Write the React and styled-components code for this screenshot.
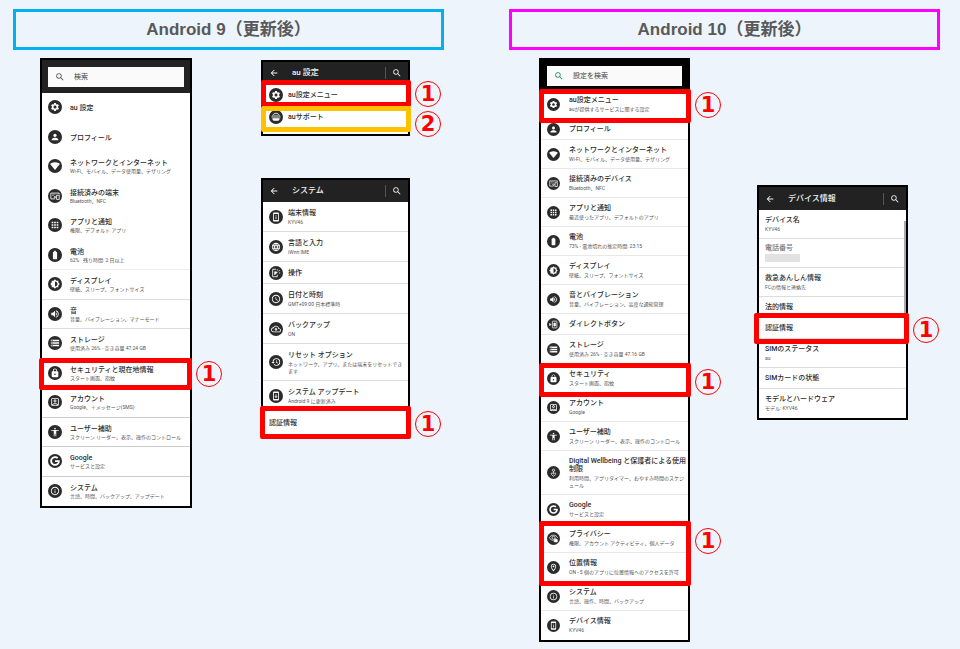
import React from "react";
import styled, { createGlobalStyle } from "styled-components";
import {
  MdAccessTime,
  MdAccessibility,
  MdApps,
  MdArrowBack,
  MdBatteryFull,
  MdBrightness6,
  MdHistory,
  MdInfoOutline,
  MdLanguage,
  MdLock,
  MdOutlineAccountBox,
  MdOutlineBackup,
  MdOutlineLocationOn,
  MdPermDeviceInformation,
  MdPerson,
  MdSearch,
  MdSettings,
  MdSignalWifi4Bar,
  MdStorage,
  MdSystemUpdate,
  MdVolumeUp,
} from "react-icons/md";
import { FaGoogle } from "react-icons/fa";

const DevicesIcon = () => (
  <svg viewBox="0 0 24 24" fill="none" stroke="currentColor" strokeWidth="2">
    <path d="M12 19H2V5h20v3" />
    <path d="M5 8h8M5 11h5" strokeWidth="1" />
    <rect x="16" y="10" width="6" height="10" />
    <circle cx="12" cy="15" r="2" />
  </svg>
);

const SupportIcon = () => (
  <svg viewBox="0 0 24 24" fill="none" stroke="currentColor" strokeWidth="2">
    <path d="M4 10c1-5 4-7 8-7s7 2 8 7" />
    <path d="M1 12h22" />
    <path d="M8 8h3M13 8h3" />
    <path d="M4 16h16l-2 4H6z" fill="currentColor" />
  </svg>
);

const TouchIcon = () => (
  <svg viewBox="0 0 24 24" fill="none" stroke="currentColor" strokeWidth="2">
    <path d="M12 3H4v18h11v-5" />
    <path d="M9 16V9l6 1-6 6z" fill="currentColor" />
    <path d="M15 3l1 3M21 5l-3 3M22 12h-3" />
  </svg>
);

const SideButtonIcon = () => (
  <svg viewBox="0 0 24 24" fill="none" stroke="currentColor" strokeWidth="2">
    <rect x="9" y="3" width="12" height="18" rx="1" />
    <path d="M13 8h4v8h-4z" fill="currentColor" />
    <path d="M2 9l3 3-3 3z" fill="currentColor" />
  </svg>
);

const WellbeingIcon = () => (
  <svg viewBox="0 0 24 24" fill="none" stroke="currentColor" strokeWidth="2">
    <circle cx="12" cy="6" r="3" />
    <path d="M12 22c-9-5-7-13 0-6 7-7 9 1 0 6z" />
    <path d="M12 9v6" />
  </svg>
);

const PrivacyIcon = () => (
  <svg viewBox="0 0 24 24" fill="none" stroke="currentColor" strokeWidth="2">
    <path d="M12 17C7 17 3 14 1 10c2-4 6-7 11-7s9 3 11 7" />
    <circle cx="12" cy="10" r="4" />
    <path d="M14 15h8v6h-8z" fill="currentColor" />
    <path d="M16 15v-2h4v2" />
  </svg>
);

const GlobalStyle = createGlobalStyle`
  body {
    margin: 0;
    background: #edf4fc;
  }

  * {
    box-sizing: border-box;
  }

  button, input {
    font: inherit;
    color: inherit;
    border: 0;
    padding: 0;
    background: none;
  }
`;

const Page = styled.main`
  display: grid;
  grid-template-columns: 1fr 1fr;
  column-gap: 65px;
  padding: 9px 20px 7px 13px;
  font-family: Roboto, "Noto Sans CJK JP", sans-serif;
`;

const Version = styled.h2`
  margin: 0 0 8px;
  border: 3px solid ${({ $color }) => $color};
  padding: 6px 0;
  color: #595959;
  font: bold 17px/23px "Liberation Sans", "Noto Sans CJK JP", sans-serif;
  text-align: center;
`;

const Screens = styled.div`
  display: grid;
  grid-template-columns: ${({ $columns }) => $columns};
  align-items: start;
  column-gap: ${({ $gap }) => $gap}px;
  padding: ${({ $padding }) => $padding};
`;

const Column = styled.div`
  display: grid;
  row-gap: 42px;
  padding-top: ${({ $top }) => $top}px;
`;

const Phone = styled.article`
  border: 2px solid #000;
  background: #fff;
  color: #2b2b2b;
`;

const SearchHeader = styled.header`
  padding: ${({ $dark }) => ($dark ? "6px 6px 4px" : "7px 6px 6px")};
  background: ${({ $dark }) => ($dark ? "#000" : "#222")};
`;

const SearchBox = styled.label`
  display: flex;
  align-items: center;
  gap: 9px;
  height: 20px;
  padding-left: 7px;
  background: #fafafa;
  color: ${({ $accent }) => $accent};

  svg {
    flex: none;
    width: 10px;
    height: 10px;
  }
`;

const SearchInput = styled.input`
  flex: 1;
  min-width: 0;
  color: #444;
  font-size: 7px;
  line-height: 10px;
  outline: 0;

  &::placeholder {
    color: #444;
    opacity: 1;
  }
`;

const TitleBar = styled.header`
  display: flex;
  align-items: center;
  height: ${({ $height = 22 }) => $height}px;
  padding-left: 6px;
  background: #222;
  color: #f2f2f2;
`;

const ScreenTitle = styled.h3`
  flex: 1;
  margin: 0 0 0 13px;
  font-size: 8px;
  font-weight: 500;
  line-height: 12px;
`;

const IconButton = styled.button`
  display: grid;
  place-items: center;
  width: 10px;
  height: 12px;

  svg {
    width: 10px;
    height: 10px;
  }
`;

const SearchButton = styled(IconButton)`
  width: 23px;
  border-left: 1px solid #555;
`;

const List = styled.div`
  position: relative;
  display: grid;
  grid-auto-rows: ${({ $even }) => ($even ? "1fr" : "auto")};
  min-height: ${({ $even }) => ($even ? "413px" : "0")};
  padding-bottom: ${({ $bottom = 0 }) => $bottom}px;
`;

const Row = styled.button`
  display: flex;
  align-items: center;
  gap: ${({ $gap = 0 }) => $gap}px;
  width: 100%;
  min-height: ${({ $height }) => $height}px;
  padding: 0 0 0 6px;
  border-bottom: 1px solid ${({ $line }) => $line};
  text-align: left;
`;

const Round = styled.span`
  flex: none;
  display: grid;
  place-items: center;
  width: ${({ $size }) => $size}px;
  height: ${({ $size }) => $size}px;
  border-radius: 50%;
  background: #2b2b2b;
  color: #fff;

  svg {
    width: ${({ $size }) => $size - 4}px;
    height: ${({ $size }) => $size - 4}px;
  }
`;

const Label = styled.span`
  display: grid;
  row-gap: ${({ $tight }) => ($tight ? 1 : 2)}px;
  padding-top: ${({ $drop = 0 }) => $drop}px;
  white-space: pre-line;
`;

const Name = styled.span`
  color: ${({ $muted }) => ($muted ? "#777" : "#2b2b2b")};
  font-size: 7px;
  font-weight: 500;
  line-height: 8px;
`;

const Detail = styled.span`
  color: #555;
  font-size: 5px;
  line-height: 7px;
`;

const Masked = styled.span`
  width: 35px;
  height: 8px;
  background: #e2e2e2;
`;

const Marked = styled.div`
  position: relative;
  display: grid;
`;

const Frame = styled.div`
  position: absolute;
  z-index: 1;
  inset: ${({ $inset }) => $inset};
  border: 5px solid ${({ $color = "#f00" }) => $color};
  border-radius: 2px;
  pointer-events: none;
`;

const Badge = styled.span`
  position: absolute;
  top: ${({ $top }) => $top};
  left: 100%;
  margin: -13px 0 0 9px;
  width: 26px;
  height: 26px;
  border: 1px solid #f00;
  border-radius: 50%;
  color: #f00;
  font: bold 21px/24px "DejaVu Sans", sans-serif;
  text-align: center;
`;

const Scrollbar = styled.div`
  position: absolute;
  top: 11px;
  right: 0;
  width: 2px;
  height: 97px;
  background: #aaa;
`;

const Item = ({ icon: Icon, name, detail, masked, height = 29, size, gap, drop, tight, line = "#ddd" }) => (
  <Row type="button" $height={height} $gap={gap} $line={line}>
    {Icon && (
      <Round $size={size}>
        <Icon />
      </Round>
    )}
    <Label $drop={drop} $tight={tight}>
      <Name $muted={masked}>{name}</Name>
      {detail && <Detail>{detail}</Detail>}
      {masked && <Masked />}
    </Label>
  </Row>
);

const Mark = ({ inset, color, number = 1, top = "50%", children }) => (
  <Marked>
    {children}
    <Frame $inset={inset} $color={color}>
      <Badge $top={top}>{number}</Badge>
    </Frame>
  </Marked>
);

const Search = ({ placeholder, dark, accent }) => (
  <SearchHeader $dark={dark}>
    <SearchBox $accent={accent}>
      <MdSearch />
      <SearchInput type="search" placeholder={placeholder} aria-label={placeholder} />
    </SearchBox>
  </SearchHeader>
);

const Bar = ({ title, height }) => (
  <TitleBar $height={height}>
    <IconButton type="button" aria-label="戻る">
      <MdArrowBack />
    </IconButton>
    <ScreenTitle>{title}</ScreenTitle>
    <SearchButton type="button" aria-label="検索">
      <MdSearch />
    </SearchButton>
  </TitleBar>
);

const android9Top = [
  { icon: MdSettings, name: "au 設定" },
  { icon: MdPerson, name: "プロフィール" },
  { icon: MdSignalWifi4Bar, name: "ネットワークとインターネット", detail: "Wi-Fi、モバイル、データ使用量、テザリング" },
  { icon: DevicesIcon, name: "接続済みの端末", detail: "Bluetooth、NFC" },
  { icon: MdApps, name: "アプリと通知", detail: "権限、デフォルト アプリ" },
  { icon: MdBatteryFull, name: "電池", detail: "62% · 残り時間: 2 日以上", line: "#eee" },
  { icon: MdBrightness6, name: "ディスプレイ", detail: "壁紙、スリープ、フォントサイズ", line: "#ddd" },
  { icon: MdVolumeUp, name: "音", detail: "音量、バイブレーション、マナーモード", line: "#ddd" },
  { icon: MdStorage, name: "ストレージ", detail: "使用済み 26% - 空き容量 47.24 GB", line: "#ddd" },
];

const android9Bottom = [
  { icon: MdOutlineAccountBox, name: "アカウント", detail: "Google、＋メッセージ(SMS)" },
  { icon: MdAccessibility, name: "ユーザー補助", detail: "スクリーン リーダー、表示、操作のコントロール" },
  { icon: FaGoogle, name: "Google", detail: "サービスと設定" },
  { icon: MdInfoOutline, name: "システム", detail: "言語、時間、バックアップ、アップデート", line: "#fff" },
];

const system = [
  { icon: MdPermDeviceInformation, name: "端末情報", detail: "KYV46" },
  { icon: MdLanguage, name: "言語と入力", detail: "iWnn IME" },
  { icon: TouchIcon, name: "操作", height: 22, drop: 0 },
  { icon: MdAccessTime, name: "日付と時刻", detail: "GMT+09:00 日本標準時" },
  { icon: MdOutlineBackup, name: "バックアップ", detail: "ON" },
  {
    icon: MdHistory,
    name: "リセット オプション",
    detail: "ネットワーク、アプリ、または端末をリセットでき\nます",
    height: 37,
  },
  { icon: MdSystemUpdate, name: "システム アップデート", detail: "Android 9 に更新済み" },
];

const android10Top = [
  { icon: MdPerson, name: "プロフィール", height: 21 },
  { icon: MdSignalWifi4Bar, name: "ネットワークとインターネット", detail: "Wi-Fi、モバイル、データ使用量、テザリング" },
  { icon: DevicesIcon, name: "接続済みのデバイス", detail: "Bluetooth、NFC" },
  { icon: MdApps, name: "アプリと通知", detail: "最近使ったアプリ、デフォルトのアプリ" },
  { icon: MdBatteryFull, name: "電池", detail: "73% - 電池切れの推定時間: 23:15" },
  { icon: MdBrightness6, name: "ディスプレイ", detail: "壁紙、スリープ、フォントサイズ" },
  { icon: MdVolumeUp, name: "音とバイブレーション", detail: "音量、バイブレーション、高度な通知管理" },
  { icon: SideButtonIcon, name: "ダイレクトボタン", height: 21 },
  { icon: MdStorage, name: "ストレージ", detail: "使用済み 26% - 空き容量 47.16 GB" },
];

const android10Middle = [
  { icon: MdOutlineAccountBox, name: "アカウント", detail: "Google" },
  { icon: MdAccessibility, name: "ユーザー補助", detail: "スクリーン リーダー、表示、操作のコントロール" },
  {
    icon: WellbeingIcon,
    name: "Digital Wellbeing と保護者による使用\n制限",
    detail: "利用時間、アプリタイマー、おやすみ時間のスケジ\nュール",
    height: 44,
  },
  { icon: FaGoogle, name: "Google", detail: "サービスと設定" },
];

const deviceTop = [
  { name: "デバイス名", detail: "KYV46" },
  { name: "電話番号", masked: true },
  { name: "救急あんしん情報", detail: "FCの情報と連絡先" },
  { name: "法的情報", height: 21 },
];

const deviceBottom = [
  { name: "SIMのステータス", detail: "au" },
  { name: "SIMカードの状態", height: 21 },
  { name: "モデルとハードウェア", detail: "モデル: KYV46", line: "#fff" },
];

const nine = { size: 14, gap: 8, drop: 2, tight: true };
const sub = { size: 14, gap: 5, height: 30, drop: 2 };
const ten = { size: 13, gap: 9, line: "#e8e8e8" };

const Android9 = () => (
  <section>
    <Version $color="#00b0f0">Android 9（更新後）</Version>
    <Screens $columns="152fr 149fr" $gap={69} $padding="0 34px 0 27px">
      <Phone>
        <Search placeholder="検索" accent="#555" />
        <List $even>
          {android9Top.map((item) => (
            <Item key={item.name} {...nine} line="#fff" {...item} />
          ))}
          <Mark inset="-1px -2px -2px -3px">
            <Item {...nine} icon={MdLock} name="セキュリティと現在地情報" detail="スタート画面、指紋" />
          </Mark>
          {android9Bottom.map((item) => (
            <Item key={item.name} {...nine} line="#ccc" {...item} />
          ))}
        </List>
      </Phone>

      <Column $top={2}>
        <Phone>
          <Bar title="au 設定" />
          <List $bottom={6}>
            <Mark inset="-4px -3px -1px -2px">
              <Item {...sub} drop={0} height={22} icon={MdSettings} name="au設定メニュー" />
            </Mark>
            <Mark inset="0 -3px -4px -2px" color="#ffc000" number={2} top="80%">
              <Item {...sub} drop={0} height={22} icon={SupportIcon} name="auサポート" line="#fff" />
            </Mark>
          </List>
        </Phone>

        <Phone>
          <Bar title="システム" />
          <List>
            {system.map((item) => (
              <Item key={item.name} {...sub} {...item} />
            ))}
            <Mark inset="-5px -3px -3px" top="58%">
              <Item name="認証情報" height={25} line="#fff" />
            </Mark>
          </List>
        </Phone>
      </Column>
    </Screens>
  </section>
);

const Android10 = () => (
  <section>
    <Version $color="#f0f">Android 10（更新後）</Version>
    <Screens $columns="1fr 1fr" $gap={67} $padding="0 32px 0 30px">
      <Phone>
        <Search placeholder="設定を検索" accent="#1e8e6e" dark />
        <List>
          <Mark inset="-1px -3px -4px -2px" top="45%">
            <Item {...ten} icon={MdSettings} name="au設定メニュー" detail="auが提供するサービスに関する設定" />
          </Mark>
          {android10Top.map((item) => (
            <Item key={item.name} {...ten} {...item} />
          ))}
          <Mark inset="-1px -3px -4px -2px" top="58%">
            <Item {...ten} icon={MdLock} name="セキュリティ" detail="スタート画面、指紋" />
          </Mark>
          {android10Middle.map((item) => (
            <Item key={item.name} {...ten} {...item} />
          ))}
          <Mark inset="-3px -3px -4px -2px" top="27%">
            <Item {...ten} icon={PrivacyIcon} name="プライバシー" detail="権限、アカウント アクティビティ、個人データ" />
            <Item
              {...ten}
              icon={MdOutlineLocationOn}
              name="位置情報"
              detail="ON - 5 個のアプリに位置情報へのアクセスを許可"
            />
          </Mark>
          <Item {...ten} icon={MdInfoOutline} name="システム" detail="言語、操作、時間、バックアップ" />
          <Item {...ten} icon={MdPermDeviceInformation} name="デバイス情報" detail="KYV46" line="#fff" />
        </List>
      </Phone>

      <Column $top={127}>
        <Phone>
          <Bar title="デバイス情報" height={23} />
          <List>
            <Scrollbar />
            {deviceTop.map((item) => (
              <Item key={item.name} {...item} />
            ))}
            <Mark inset="-5px -3px -5px -5px" top="56%">
              <Item name="認証情報" height={21} />
            </Mark>
            {deviceBottom.map((item) => (
              <Item key={item.name} {...item} />
            ))}
          </List>
        </Phone>
      </Column>
    </Screens>
  </section>
);

const App = () => (
  <>
    <GlobalStyle />
    <Page>
      <Android9 />
      <Android10 />
    </Page>
  </>
);

export default App;
